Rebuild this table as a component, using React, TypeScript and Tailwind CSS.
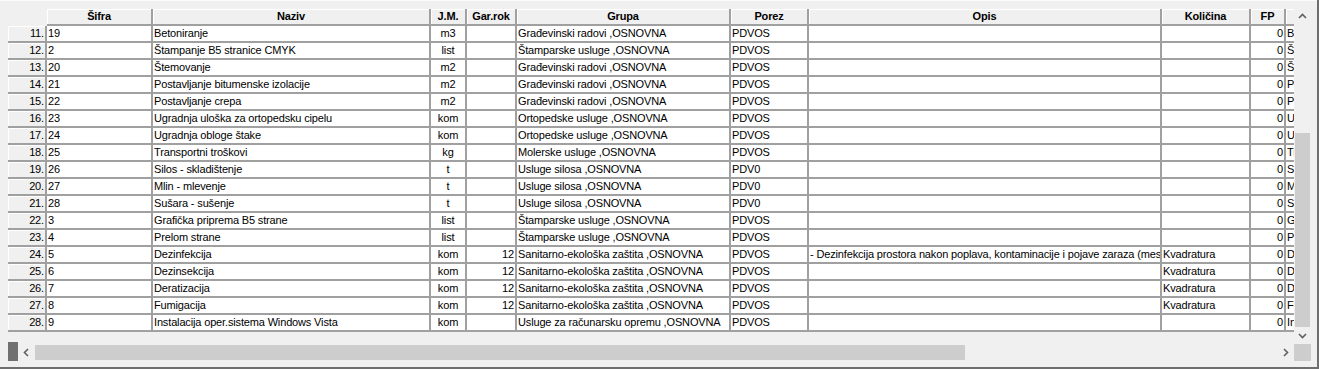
const font = { fontFamily: '"Liberation Sans", Arial, sans-serif' }

interface Col {
  label: string
  cls: string
}

const cols: Col[] = [
  { label: 'Šifra', cls: 'w-[106px] text-left' },
  { label: 'Naziv', cls: 'w-[278px] text-left' },
  { label: 'J.M.', cls: 'w-[36px] text-center' },
  { label: 'Gar.rok', cls: 'w-[50px] text-right' },
  { label: 'Grupa', cls: 'w-[214px] text-left' },
  { label: 'Porez', cls: 'w-[78px] text-left' },
  { label: 'Opis', cls: 'w-[353px] text-left' },
  { label: 'Količina', cls: 'w-[89px] text-left' },
  { label: 'FP', cls: 'w-[35px] text-right' },
  { label: 'Napomena', cls: 'w-[120px] text-left' },
]

const G = 'Građevinski radovi ,OSNOVNA'
const S = 'Štamparske usluge ,OSNOVNA'
const O = 'Ortopedske usluge ,OSNOVNA'
const U = 'Usluge silosa ,OSNOVNA'
const SE = 'Sanitarno-ekološka zaštita ,OSNOVNA'

const rows: string[][] = [
  ['19', 'Betoniranje', 'm3', '', G, 'PDVOS', '', '', '0'],
  ['2', 'Štampanje B5 stranice CMYK', 'list', '', S, 'PDVOS', '', '', '0'],
  ['20', 'Štemovanje', 'm2', '', G, 'PDVOS', '', '', '0'],
  ['21', 'Postavljanje bitumenske izolacije', 'm2', '', G, 'PDVOS', '', '', '0'],
  ['22', 'Postavljanje crepa', 'm2', '', G, 'PDVOS', '', '', '0'],
  ['23', 'Ugradnja uloška za ortopedsku cipelu', 'kom', '', O, 'PDVOS', '', '', '0'],
  ['24', 'Ugradnja obloge štake', 'kom', '', O, 'PDVOS', '', '', '0'],
  ['25', 'Transportni troškovi', 'kg', '', 'Molerske usluge ,OSNOVNA', 'PDVOS', '', '', '0'],
  ['26', 'Silos - skladištenje', 't', '', U, 'PDV0', '', '', '0'],
  ['27', 'Mlin - mlevenje', 't', '', U, 'PDV0', '', '', '0'],
  ['28', 'Sušara - sušenje', 't', '', U, 'PDV0', '', '', '0'],
  ['3', 'Grafička priprema B5 strane', 'list', '', S, 'PDVOS', '', '', '0'],
  ['4', 'Prelom strane', 'list', '', S, 'PDVOS', '', '', '0'],
  ['5', 'Dezinfekcija', 'kom', '12', SE, 'PDVOS', '- Dezinfekcija prostora nakon poplava, kontaminacije i pojave zaraza (mesta epidemije)', 'Kvadratura', '0'],
  ['6', 'Dezinsekcija', 'kom', '12', SE, 'PDVOS', '', 'Kvadratura', '0'],
  ['7', 'Deratizacija', 'kom', '12', SE, 'PDVOS', '', 'Kvadratura', '0'],
  ['8', 'Fumigacija', 'kom', '12', SE, 'PDVOS', '', 'Kvadratura', '0'],
  ['9', 'Instalacija oper.sistema Windows Vista', 'kom', '', 'Usluge za računarsku opremu ,OSNOVNA', 'PDVOS', '', '', '0'],
]

function Chevron({ dir }: { dir: 'up' | 'down' | 'left' | 'right' }) {
  const pts = {
    up: '1,6 4.5,2.5 8,6',
    down: '1,3 4.5,6.5 8,3',
    left: '6,1 2.5,4.5 6,8',
    right: '3,1 6.5,4.5 3,8',
  }[dir]
  return (
    <svg width="9" height="9" viewBox="0 0 9 9">
      <polyline points={pts} fill="none" stroke="#606060" strokeWidth="1.6" />
    </svg>
  )
}

export default function App() {
  return (
    <div
      style={font}
      className="w-[1319px] h-[369px] bg-[#f0f0f0] border-r-2 border-b-2 border-[#6e6e6e] text-[11px] tracking-[-0.15px] text-black flex flex-col"
    >
      <div className="h-[8px] border-t border-[#fbfbfb]" />
      <div className="flex h-[336px]">
        <div className="w-[8px]" />
        <div className="w-[1286px] overflow-hidden pt-[1px]">
          {/* header */}
          <div className="flex h-[17px] w-[1500px]">
            <div className="w-[39px] shrink-0" />
            {cols.map((c) => (
              <div
                key={c.label}
                className={`${c.cls} shrink-0 h-[17px] border-r-2 border-b-2 border-[#a0a0a0] shadow-[inset_1px_1px_0_#ffffff] font-bold text-center! leading-[14px] overflow-hidden whitespace-nowrap`}
              >
                {c.label}
              </div>
            ))}
          </div>
          {/* rows */}
          {rows.map((r, i) => (
            <div key={i} className="flex h-[17px] w-[1500px]">
              <div className="w-[39px] shrink-0 h-[17px] border-r-2 border-b-2 border-[#a0a0a0] shadow-[inset_1px_1px_0_#ffffff] text-right pr-[1px] leading-[15px]">
                {i + 11}.
              </div>
              {cols.map((c, j) => (
                <div
                  key={j}
                  className={`${c.cls} shrink-0 h-[17px] bg-white border-r-2 border-b-2 border-[#a0a0a0] px-[1px] leading-[15px] overflow-hidden whitespace-nowrap`}
                >
                  {j === 9 ? r[1] : r[j]}
                </div>
              ))}
            </div>
          ))}
        </div>
        {/* vertical scrollbar */}
        <div className="w-[17px] flex flex-col">
          <div className="h-[17px] flex items-center justify-center">
            <Chevron dir="up" />
          </div>
          <div className="flex-1 px-[1px] pt-[108px]">
            <div className="h-full bg-[#cdcdcd]" />
          </div>
          <div className="h-[17px] flex items-center justify-center">
            <Chevron dir="down" />
          </div>
        </div>
      </div>
      {/* horizontal scrollbar */}
      <div className="flex h-[17px]">
        <div className="w-[8px]" />
        <div className="w-[10px] -mt-[2px] bg-[#707070]" />
        <div className="w-[17px] flex items-center justify-center">
          <Chevron dir="left" />
        </div>
        <div className="w-[1242px] py-[1px]">
          <div className="w-[930px] h-full bg-[#cdcdcd]" />
        </div>
        <div className="w-[17px] flex items-center justify-center">
          <Chevron dir="right" />
        </div>
        <div className="w-[17px] bg-[#cdcdcd]" />
      </div>
    </div>
  )
}
